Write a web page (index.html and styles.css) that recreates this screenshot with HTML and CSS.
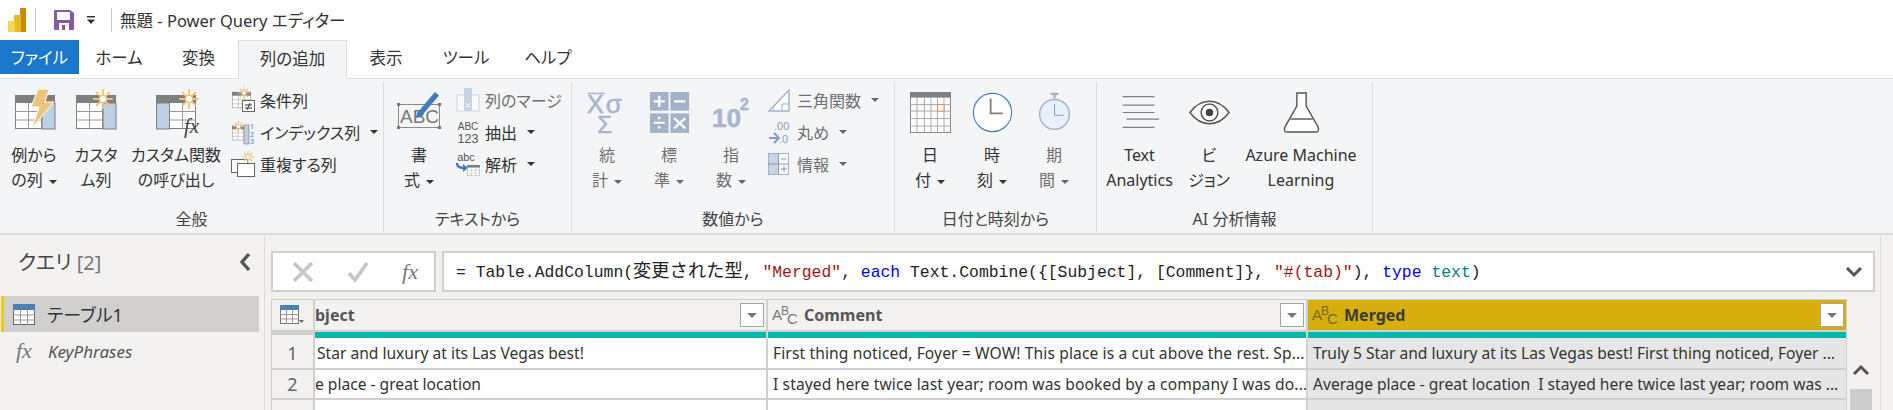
FILE: index.html
```html
<!DOCTYPE html>
<html lang="ja">
  <head>
    <meta charset="UTF-8">
    <title>無題 - Power Query エディター</title>
    <link rel="stylesheet" href="styles.css">
  </head>
  <body>
    <svg class="defs" aria-hidden="true">
      <symbol id="sun" viewBox="0 0 20 20">
        <g stroke="#eec47c" stroke-width="2" stroke-linecap="round">
          <path d="M10 1v5M10 14v5M1 10h5M14 10h5M3.600 3.600l3.500 3.500M12.900 12.900l3.500 3.500M3.600 16.400l3.500-3.500M12.900 7.100l3.500-3.500"/>
        </g>
        <circle cx="10" cy="10" r="3.600" fill="#fff" stroke="#eec47c" stroke-width="1.400"/>
      </symbol>
      <symbol id="grid" viewBox="0 0 40 34">
        <rect x=".5" y=".5" width="39" height="33" fill="#fff" stroke="#7f7f7f"/>
        <rect x="0" y="0" width="40" height="8" fill="#7f7f7f"/>
        <path d="M0 16.500h40M0 25h40M13.500 8v26M26.500 8v26" stroke="#9a9a9a" fill="none"/>
      </symbol>
    </svg>

    <header class="titlebar">
      <svg class="logo" viewBox="0 0 18 24">
        <rect x="12" width="6" height="24" fill="#c98a0c"/>
        <rect x="6" y="7" width="7" height="17" fill="#e8b923"/>
        <rect y="13" width="7" height="11" fill="#f5d44f"/>
      </svg>
      <span class="tb-sep"></span>
      <svg class="save" viewBox="0 0 20 20">
        <path d="M1 0h15l4 3v16a1 1 0 0 1-1 1H1a1 1 0 0 1-1-1V1a1 1 0 0 1 1-1z" fill="#8658a8"/>
        <rect x="3" y="2" width="13" height="8" fill="#fff"/>
        <rect x="5" y="13" width="10" height="7" fill="#fff"/>
        <rect x="8" y="15" width="3" height="5" fill="#8658a8"/>
      </svg>
      <svg class="qat-more" viewBox="0 0 10 10">
        <path d="M1 1h8v1.500H1zM1 4.500h8L5 9z" fill="#333"/>
      </svg>
      <span class="tb-sep tb-sep-2"></span>
      <span class="doc-title">無題 - Power Query エディター</span>
    </header>

    <nav class="tabs">
      <div class="tab tab-file">ファイル</div>
      <div class="tab">ホーム</div>
      <div class="tab">変換</div>
      <div class="tab tab-active">列の追加</div>
      <div class="tab">表示</div>
      <div class="tab">ツール</div>
      <div class="tab">ヘルプ</div>
    </nav>

    <section class="ribbon">
      <div class="group group-general">
        <div class="group-body">
          <div class="btn w60">
            <svg class="ic" viewBox="0 0 44 44">
              <use href="#grid" x="3" y="6" width="40" height="34"/>
              <rect x="30" y="14" width="13" height="26" fill="#bdd0e4" stroke="#7f7f7f"/>
              <path d="M37 0h-11l-7 18h8l-7 21 22-26h-9z" fill="#eec47c" stroke="#fff"/>
            </svg>
            <div class="label">例から<br>の列<i class="caret"></i></div>
          </div>
          <div class="btn w64">
            <svg class="ic" viewBox="0 0 44 44">
              <use href="#grid" x="2" y="6" width="40" height="34"/>
              <rect x="29" y="14" width="13" height="26" fill="#bdd0e4" stroke="#7f7f7f"/>
              <use href="#sun" x="19" y="0" width="20" height="20"/>
            </svg>
            <div class="label">カスタ<br>ム列</div>
          </div>
          <div class="btn w96">
            <svg class="ic ic-wide" viewBox="0 0 56 50">
              <use href="#grid" x="8" y="6" width="40" height="34"/>
              <rect x="8.500" y="14" width="13" height="26" fill="#bdd0e4" stroke="#7f7f7f"/>
              <use href="#sun" x="31" y="0" width="20" height="20"/>
              <text class="fx" x="36" y="44" font-size="21">fx</text>
            </svg>
            <div class="label">カスタム関数<br>の呼び出し</div>
          </div>
          <div class="stack stack-first">
            <div class="row">
              <svg class="ic-sm" viewBox="0 0 24 26">
                <use href="#grid" x="1" y="3" width="19" height="20"/>
                <use href="#sun" x="7" y="0" width="12" height="12"/>
                <rect x="11.500" y="13.500" width="12" height="11" fill="#fff" stroke="#666"/>
                <path d="M14 18h7M14 21h7M19 16l-3 7" stroke="#333" fill="none"/>
              </svg>
              <span>条件列</span>
            </div>
            <div class="row">
              <svg class="ic-sm" viewBox="0 0 24 26">
                <use href="#grid" x="1" y="3" width="17" height="22"/>
                <rect x="13" y="6" width="5" height="19" fill="#bdd0e4" stroke="#7f7f7f" stroke-width=".6"/>
                <use href="#sun" x="2" y="2" width="11" height="11"/>
                <text class="num" x="19" y="10">1</text>
                <text class="num" x="19" y="18">2</text>
                <text class="num" x="19" y="25">3</text>
              </svg>
              <span>インデックス列</span><i class="caret"></i>
            </div>
            <div class="row">
              <svg class="ic-sm" viewBox="0 0 24 26">
                <rect x=".5" y="8.500" width="16" height="13" fill="#fff" stroke="#666"/>
                <rect x="6.500" y="12.500" width="17" height="13" fill="#fff" stroke="#666"/>
                <use href="#sun" x="11" y="0" width="12" height="12"/>
              </svg>
              <span>重複する列</span>
            </div>
          </div>
        </div>
        <div class="group-label">全般</div>
      </div>

      <div class="group group-text">
        <div class="group-body">
          <div class="btn w70">
            <svg class="ic" viewBox="0 0 44 44">
              <rect x="1.500" y="15.500" width="41" height="23" fill="none" stroke="#8a8a8a"/>
              <g fill="#777">
                <rect y="14" width="3" height="3"/><rect x="41" y="14" width="3" height="3"/>
                <rect y="37" width="3" height="3"/><rect x="41" y="37" width="3" height="3"/>
              </g>
              <text class="abc" x="3" y="34" font-size="19">ABC</text>
              <path d="M20 24L38 3l4 3.500-18 21-5 1.500z" fill="#3f7cbf"/>
            </svg>
            <div class="label">書<br>式<i class="caret"></i></div>
          </div>
          <div class="stack stack-text">
            <div class="row row-off">
              <svg class="ic-sm" viewBox="0 0 24 26">
                <rect x="1" y="8" width="22" height="16" fill="#f8fafc" stroke="#c5d3e3"/>
                <rect x="8" y="1" width="8" height="23" fill="#c5d3e3"/>
                <path d="M9 16l6 5M15 16l-6 5" stroke="#fff"/>
              </svg>
              <span>列のマージ</span>
            </div>
            <div class="row">
              <svg class="ic-sm" viewBox="0 0 24 26">
                <text class="tiny" x="12" y="11" font-size="10">ABC</text>
                <text class="tiny" x="12" y="24" font-size="12.500">123</text>
              </svg>
              <span>抽出</span><i class="caret"></i>
            </div>
            <div class="row">
              <svg class="ic-sm" viewBox="0 0 24 26">
                <text class="tiny" x="10" y="10" font-size="11">abc</text>
                <path d="M1 12c0 4 3 5 7 5" stroke="#3f7cbf" stroke-width="2.400" fill="none"/>
                <path d="M7 13l5 4-5 4z" fill="#3f7cbf"/>
                <use href="#grid" x="11" y="14" width="13" height="11"/>
              </svg>
              <span>解析</span><i class="caret"></i>
            </div>
          </div>
        </div>
        <div class="group-label">テキストから</div>
      </div>

      <div class="group group-number">
        <div class="group-body">
          <div class="btn w62 off">
            <svg class="ic ic-open" viewBox="0 0 44 44">
              <path d="M1 1.500h18" stroke="#a9b6cd" stroke-width="1.600"/>
              <text class="sym" x="0" y="23" font-size="27">X</text>
              <text class="sym" x="20" y="23" font-size="28">σ</text>
              <text class="sym" x="11" y="44" font-size="26">Σ</text>
            </svg>
            <div class="label">統<br>計<i class="caret"></i></div>
          </div>
          <div class="btn w62 off">
            <svg class="ic" viewBox="0 0 44 44">
              <g fill="#a3b1ca">
                <rect x="1" y="0" width="20" height="20"/><rect x="23" y="0" width="20" height="20"/>
                <rect x="1" y="23" width="20" height="21"/><rect x="23" y="23" width="20" height="21"/>
              </g>
              <path d="M5 10h12M11 4v12M27 10h12M5 33h12M27 28l12 11M39 28L27 39" stroke="#fff" stroke-width="2.400"/>
              <circle cx="11" cy="28" r="1.500" fill="#fff"/><circle cx="11" cy="38" r="1.500" fill="#fff"/>
            </svg>
            <div class="label">標<br>準<i class="caret"></i></div>
          </div>
          <div class="btn w62 off">
            <svg class="ic" viewBox="0 0 44 44">
              <text class="sym sym-bold" x="1" y="38" font-size="28">10</text>
              <text class="sym sym-bold" x="31" y="19" font-size="17">2</text>
            </svg>
            <div class="label">指<br>数<i class="caret"></i></div>
          </div>
          <div class="stack stack-number">
            <div class="row row-off">
              <svg class="ic-sm" viewBox="0 0 24 26">
                <path d="M1 24L21 3v21z" fill="#f8fafc" stroke="#a3b1ca" stroke-width="1.400"/>
                <path d="M14 24v-7h7M6 24c0-2-1-3-2-4" stroke="#a3b1ca" fill="none"/>
              </svg>
              <span>三角関数</span><i class="caret"></i>
            </div>
            <div class="row row-off">
              <svg class="ic-sm" viewBox="0 0 24 26">
                <text class="round" x="6" y="11">.00</text>
                <text class="round" x="11" y="24">.0</text>
                <path d="M1 19h8" stroke="#7f9bc4" stroke-width="2"/>
                <path d="M6 14l5 5-5 5" stroke="#7f9bc4" stroke-width="2" fill="none"/>
              </svg>
              <span>丸め</span><i class="caret"></i>
            </div>
            <div class="row row-off">
              <svg class="ic-sm" viewBox="0 0 24 26">
                <rect x=".5" y="2.500" width="20" height="21" fill="#f8fafc" stroke="#a3b1ca"/>
                <rect x="1" y="3" width="9" height="20" fill="#c9d4e4"/>
                <path d="M0 13h21M10.500 3v20M13 8h5M13 18h6M16 15v6" stroke="#8a9bb8" fill="none"/>
              </svg>
              <span>情報</span><i class="caret"></i>
            </div>
          </div>
        </div>
        <div class="group-label">数値から</div>
      </div>

      <div class="group group-date">
        <div class="group-body">
          <div class="btn w62">
            <svg class="ic" viewBox="0 0 44 44">
              <rect x=".5" y=".5" width="43" height="43" fill="#fff" stroke="#7f7f7f"/>
              <rect width="44" height="6" fill="#7f7f7f"/>
              <path d="M0 13.500h44M0 20.500h44M0 28.500h44M0 36.500h44M7.500 6v38M15.500 6v38M22.500 6v38M29.500 6v38M36.500 6v38" stroke="#a6a6a6" fill="none"/>
              <rect x="29.500" y="13.500" width="7" height="7" fill="#fff" stroke="#e08a3c"/>
            </svg>
            <div class="label">日<br>付<i class="caret"></i></div>
          </div>
          <div class="btn w62">
            <svg class="ic" viewBox="0 0 44 44">
              <circle cx="22" cy="22" r="20.500" fill="#fff" stroke="#4a80b8" stroke-width="1.200"/>
              <path d="M20 7v16h13" stroke="#7f7f7f" stroke-width="2" fill="none"/>
            </svg>
            <div class="label">時<br>刻<i class="caret"></i></div>
          </div>
          <div class="btn w62 off">
            <svg class="ic" viewBox="0 0 44 44">
              <path d="M18 2h8M22 2v5" stroke="#a3b1ca" stroke-width="2.400"/>
              <circle cx="22" cy="24" r="16" fill="#e8f0fa" stroke="#a3b1ca" stroke-width="1.500"/>
              <path d="M22 13v12h10" stroke="#8a9bb8" fill="none"/>
            </svg>
            <div class="label">期<br>間<i class="caret"></i></div>
          </div>
        </div>
        <div class="group-label">日付と時刻から</div>
      </div>

      <div class="group group-ai">
        <div class="group-body">
          <div class="btn w85">
            <svg class="ic" viewBox="0 0 44 44">
              <path d="M4 5h34M4 14h34M4 22h34M8 29h35M4 38h34" stroke="#7f7f7f" stroke-width="1.300"/>
            </svg>
            <div class="label">Text<br>Analytics</div>
          </div>
          <div class="btn w54">
            <svg class="ic" viewBox="0 0 44 44">
              <path d="M1 22c6-8 13-12 21-12s15 4 21 12c-6 8-13 12-21 12S7 30 1 22z" fill="#fff" stroke="#555" stroke-width="1.600"/>
              <circle cx="22" cy="22" r="9" fill="#fff" stroke="#555" stroke-width="1.600"/>
              <circle cx="22" cy="22" r="4" fill="#444"/>
            </svg>
            <div class="label">ビ<br>ジョン</div>
          </div>
          <div class="btn w130">
            <svg class="ic" viewBox="0 0 44 44">
              <path d="M17 1h10v14l13 23c1 3 0 5-3 5H7c-3 0-4-2-3-5l13-23z" fill="#fff" stroke="#555" stroke-width="1.500"/>
              <path d="M10 29h24" stroke="#555" stroke-width="1.500"/>
            </svg>
            <div class="label">Azure Machine<br>Learning</div>
          </div>
        </div>
        <div class="group-label">AI 分析情報</div>
      </div>
    </section>

    <main class="main">
      <aside class="queries">
        <div class="queries-head">
          <span>クエリ <span class="count">[2]</span></span>
          <svg class="collapse" viewBox="0 0 12 20">
            <path d="M10 2L3 10l7 8" stroke="#555" stroke-width="3.400" fill="none"/>
          </svg>
        </div>
        <div class="query query-active">
          <svg class="query-icon" viewBox="0 0 22 24">
            <rect x=".5" y="2.500" width="21" height="20" fill="#fff" stroke="#666"/>
            <rect y="2" width="22" height="6" fill="#4a80b8"/>
            <path d="M0 13h22M0 18h22M7.500 8v15M14.500 8v15" stroke="#999" fill="none"/>
          </svg>
          <span>テーブル1</span>
        </div>
        <div class="query query-fn">
          <span class="fn-mark">fx</span>
          <span>KeyPhrases</span>
        </div>
      </aside>

      <div class="workspace">
        <div class="formula-row">
          <div class="formula-btns">
            <svg class="fb-icon" viewBox="0 0 22 22">
              <path d="M2 2l18 18M20 2L2 20" stroke="#c8c6c4" stroke-width="3.600"/>
            </svg>
            <svg class="fb-icon" viewBox="0 0 22 22">
              <path d="M2 12l6 7L20 2" stroke="#c8c6c4" stroke-width="3.600" fill="none"/>
            </svg>
            <span class="fn-mark fb-fx">fx</span>
          </div>
          <div class="formula">
            <code>= Table.AddColumn(<span class="cjk">変更された型</span>, <b class="str">"Merged"</b>, <b class="kw">each</b> Text.Combine({[Subject], [Comment]}, <b class="str">"#(tab)"</b>), <b class="kw">type</b> <b class="ty">text</b>)</code>
            <svg class="expand" viewBox="0 0 18 12">
              <path d="M2 2l7 7 7-7" stroke="#555" stroke-width="3" fill="none"/>
            </svg>
          </div>
        </div>

        <div class="table-row">
          <div class="table">
            <div class="corner">
              <svg class="corner-icon" viewBox="0 0 24 20">
                <rect x=".5" y=".5" width="18" height="18" fill="#fff" stroke="#777"/>
                <rect width="19" height="5" fill="#4a80b8"/>
                <path d="M0 9.500h19M0 14h19M6.500 5v14M12.500 5v14" stroke="#999" fill="none"/>
                <path d="M19 15h5l-2.500 3z" fill="#666"/>
              </svg>
            </div>
            <div class="head">
              <span class="head-name head-cut">bject</span>
              <span class="filter"><i></i></span>
            </div>
            <div class="head">
              <svg class="type" viewBox="0 0 24 20"><text x="0" y="15" font-size="15">A</text><text x="9" y="10" font-size="12">B</text><text x="15" y="19" font-size="15">C</text></svg>
              <span class="head-name">Comment</span>
              <span class="filter"><i></i></span>
            </div>
            <div class="head head-sel">
              <svg class="type" viewBox="0 0 24 20"><text x="0" y="15" font-size="15">A</text><text x="9" y="10" font-size="12">B</text><text x="15" y="19" font-size="15">C</text></svg>
              <span class="head-name">Merged</span>
              <span class="filter"><i></i></span>
            </div>

            <div class="stripe-gap"></div>
            <div class="stripe"></div>
            <div class="stripe"></div>
            <div class="stripe"></div>

            <div class="num-cell">1</div>
            <div class="cell cell-first">Star and luxury at its Las Vegas best!</div>
            <div class="cell cell-loose">First thing noticed, Foyer = WOW! This place is a cut above the rest. Sp...</div>
            <div class="cell cell-sel">Truly 5 Star and luxury at its Las Vegas best! First thing noticed, Foyer ...</div>

            <div class="num-cell">2</div>
            <div class="cell cell-cut">e place - great location</div>
            <div class="cell cell-loose">I stayed here twice last year; room was booked by a company I was do...</div>
            <div class="cell cell-sel">Average place - great location&nbsp; I stayed here twice last year; room was ...</div>

            <div class="num-cell"></div>
            <div class="cell"></div>
            <div class="cell"></div>
            <div class="cell cell-sel"></div>
          </div>
          <div class="vscroll">
            <svg class="vs-up" viewBox="0 0 18 12">
              <path d="M2 10l7-7 7 7" stroke="#555" stroke-width="3" fill="none"/>
            </svg>
            <div class="vs-thumb"></div>
          </div>
        </div>
      </div>
    </main>
  </body>
</html>
```

FILE: styles.css
```css
:root {
  --ribbon-bg: #f3f5f7;
  --pane-bg: #f3f2f1;
  --line: #d2d0ce;
  --soft-line: #dcdee0;
  --off-text: #6f6f6f;
  --off-icon: #a9b6cd;
  --ui-font: "Noto Sans", "Noto Sans CJK JP", sans-serif;
}

html,
body {
  height: 410px;
  overflow: hidden;
}

body {
  margin: 0;
  font-family: var(--ui-font);
  font-size: 16px;
  font-feature-settings: "palt";
  color: #333;
  background: #fff;
}

.defs {
  position: absolute;
  width: 0;
  height: 0;
}

/* title bar */

.titlebar {
  display: flex;
  align-items: center;
  height: 40px;
  padding-left: 8px;
}

.logo {
  width: 18px;
  height: 24px;
}

.tb-sep {
  width: 1px;
  height: 24px;
  margin: 0 18px 0 9px;
  background: #c8c8c8;
}

.tb-sep-2 {
  margin: 0 8px 0 15px;
}

.save {
  width: 20px;
  height: 20px;
}

.qat-more {
  width: 10px;
  height: 10px;
  margin-left: 12px;
}

.doc-title {
  font-size: 16.5px;
}

/* tabs */

.tabs {
  display: grid;
  grid-template-columns: 79px 80px 79px 109px 78px 82px 82px;
  height: 39px;
  box-sizing: border-box;
  border-bottom: 1px solid var(--soft-line);
}

.tab {
  display: flex;
  align-items: center;
  justify-content: center;
  height: 34px;
  font-size: 16.5px;
}

.tab-file {
  background: #1a77c9;
  color: #fff;
}

.tab-active {
  height: 39px;
  padding-bottom: 5px;
  box-sizing: border-box;
  background: var(--ribbon-bg);
  border: 1px solid var(--soft-line);
  border-bottom: 0;
}

/* ribbon */

.ribbon {
  display: flex;
  height: 156px;
  box-sizing: border-box;
  padding-top: 3px;
  background: var(--ribbon-bg);
  border-bottom: 2px solid var(--soft-line);
}

.group {
  display: flex;
  flex-direction: column;
  height: 150px;
  box-sizing: border-box;
  border-right: 1px solid var(--soft-line);
}

.group-general { width: 384px; }
.group-text { width: 188px; }
.group-number { width: 323px; }
.group-date { width: 202px; }
.group-ai { width: 276px; }

.group-body {
  display: flex;
  flex: 1;
  padding-top: 7px;
}

.group-general .group-body { padding-left: 4px; }
.group-number .group-body { padding: 10px 0 0 4px; }
.group-date .group-body { padding: 10px 0 0 4px; }
.group-ai .group-body { padding-top: 10px; }

.group-number .ic,
.group-date .ic,
.group-ai .ic {
  width: 41px;
  height: 41px;
}

.group-label {
  height: 25px;
  line-height: 25px;
  text-align: center;
  font-size: 16px;
  color: #444;
}

.btn {
  display: flex;
  flex-direction: column;
  align-items: center;
}

.w54 { width: 54px; }
.w60 { width: 60px; }
.w62 { width: 62px; }
.w64 { width: 64px; }
.w70 { width: 70px; }
.w85 { width: 85px; }
.w96 { width: 96px; }
.w130 { width: 130px; }

.ic {
  width: 44px;
  height: 44px;
  flex: none;
}

.ic-open {
  overflow: visible;
}

.ic-wide {
  width: 56px;
  height: 50px;
  margin-bottom: -6px;
}

.label {
  margin-top: 10px;
  line-height: 25px;
  text-align: center;
  white-space: nowrap;
}

.off .label,
.row-off {
  color: var(--off-text);
}

.caret {
  display: inline-block;
  width: 0;
  height: 0;
  margin-left: 6px;
  vertical-align: middle;
  border-left: 4px solid transparent;
  border-right: 4px solid transparent;
  border-top: 4px solid #333;
}

.off .caret,
.row-off .caret {
  border-top-color: #666;
}

.stack {
  display: flex;
  flex-direction: column;
  margin-top: -5px;
}

.stack-first { margin-left: 7px; }
.stack-text { margin-left: 2px; }
.stack-number { margin: -8px 0 0 6px; }

.row {
  display: flex;
  align-items: center;
  gap: 5px;
  height: 32px;
  white-space: nowrap;
}

.row .caret {
  margin-left: 5px;
}

.ic-sm {
  width: 24px;
  height: 26px;
  flex: none;
}

.fx,
.fn-mark {
  font-family: "Liberation Serif", serif;
  font-style: italic;
}

.fx { fill: #444; }

.num {
  font-size: 7px;
  fill: #3f7cbf;
}

.abc {
  font-family: "Liberation Sans", sans-serif;
  fill: #777;
}

.tiny {
  font-family: "Liberation Sans", sans-serif;
  text-anchor: middle;
  fill: #555;
}

.sym {
  font-family: "Liberation Sans", sans-serif;
  fill: var(--off-icon);
  stroke: var(--off-icon);
  stroke-width: 0.6;
}

.sym-bold {
  font-weight: bold;
}

.round {
  font-size: 11px;
  font-family: "Liberation Sans", sans-serif;
  fill: #8a9bb8;
}

/* lower part */

.main {
  display: flex;
  height: 175px;
  background: var(--pane-bg);
}

.queries {
  width: 265px;
  flex: none;
  box-sizing: border-box;
  border-right: 1px solid var(--soft-line);
}

.queries-head {
  display: flex;
  align-items: center;
  justify-content: space-between;
  height: 53px;
  margin-bottom: 8px;
  padding: 0 13px 0 18px;
  font-size: 20px;
  color: #444;
}

.count {
  color: #777;
}

.collapse {
  width: 12px;
  height: 20px;
}

.query {
  display: flex;
  align-items: center;
  gap: 12px;
  width: 258px;
  margin-left: 1px;
  box-sizing: border-box;
  padding-left: 11px;
  font-size: 18px;
}

.query-active {
  height: 36px;
  background: #d2d0ce;
  border-left: 3px solid #f2c811;
  padding-left: 9px;
}

.query-icon {
  width: 22px;
  height: 24px;
}

.query-fn {
  height: 38px;
  font-style: italic;
  font-size: 17px;
  color: #555;
}

.fn-mark {
  font-size: 22px;
  color: #777;
  margin: 0 4px 0 4px;
}

.workspace {
  flex: 1;
  padding: 16px 0 0 6px;
  border-right: 1px solid var(--soft-line);
  margin-right: 12px;
}

.formula-row {
  display: flex;
  gap: 6px;
  width: 1604px;
  height: 41px;
}

.formula-btns,
.formula {
  display: flex;
  align-items: center;
  box-sizing: border-box;
  background: #fff;
  border: 2px solid var(--line);
}

.formula-btns {
  width: 165px;
  flex: none;
  justify-content: space-between;
  padding: 0 16px 0 19px;
}

.fb-icon {
  width: 22px;
  height: 22px;
}

.fb-fx {
  margin: 0;
}

.formula {
  flex: 1;
  justify-content: space-between;
  padding: 0 10px 0 12px;
}

code {
  margin-top: 2px;
  font-family: "Liberation Mono", "Noto Sans CJK JP", monospace;
  font-size: 16.4px;
  font-feature-settings: normal;
  color: #222;
}

code b {
  font-weight: normal;
}

.cjk {
  font-size: 18.3px;
  line-height: 1;
}

.str { color: #a31515; }
.kw { color: #0000ff; }
.ty { color: #008080; }

.expand {
  width: 18px;
  height: 12px;
}

.table-row {
  display: flex;
  margin-top: 7px;
}

.table {
  display: grid;
  grid-template-columns: 41px 451px 538px 538px;
  grid-template-rows: 32px 6px 32px 30px 30px;
  column-gap: 2px;
  width: 1576px;
  height: 111px;
  box-sizing: border-box;
  padding: 1px 1px 0;
  overflow: hidden;
  background: var(--line);
}

.corner,
.head,
.num-cell {
  background: var(--pane-bg);
}

.corner {
  display: flex;
  align-items: center;
  padding-left: 8px;
  border-bottom: 2px solid var(--line);
}

.corner-icon {
  width: 24px;
  height: 20px;
}

.head {
  display: flex;
  align-items: center;
  gap: 8px;
  padding: 0 2px 0 4px;
  border-bottom: 2px solid var(--line);
  font-size: 16px;
  font-weight: bold;
  color: #555;
}

.head-name {
  flex: 1;
}

.head-cut {
  margin-left: -4px;
}

.head-sel {
  background: #d6af0c;
  color: #3b3b3b;
}

.type {
  width: 24px;
  height: 20px;
  overflow: visible;
  fill: #777;
  font-family: "Liberation Sans", sans-serif;
  font-weight: normal;
}

.head-sel .type {
  fill: #7a6a28;
}

.filter {
  display: flex;
  align-items: center;
  justify-content: center;
  width: 24px;
  height: 24px;
  box-sizing: border-box;
  background: #fff;
  border: 1px solid #a6a6a6;
}

.filter i {
  width: 0;
  height: 0;
  border-left: 5px solid transparent;
  border-right: 5px solid transparent;
  border-top: 5px solid #777;
}

.stripe {
  background: #01b8aa;
}

.stripe-gap {
  background: var(--pane-bg);
  border-top: 3px solid var(--line);
}

.num-cell {
  display: flex;
  align-items: center;
  justify-content: center;
  border-bottom: 2px solid var(--line);
  font-size: 18px;
  color: #666;
}

.cell {
  display: flex;
  align-items: center;
  padding-left: 5px;
  background: #fff;
  border-bottom: 2px solid var(--line);
  font-size: 15.6px;
  white-space: nowrap;
  overflow: hidden;
  color: #333;
}

.cell-loose {
  letter-spacing: 0.12px;
}

.cell-first {
  padding-left: 2px;
}

.cell-cut {
  padding-left: 0;
}

.cell-sel {
  background: #e6e6e6;
}

.vscroll {
  width: 22px;
  margin-left: 3px;
  padding-top: 65px;
}

.vs-up {
  display: block;
  width: 18px;
  height: 12px;
  margin: 0 auto 13px;
}

.vs-thumb {
  height: 40px;
  background: #cdcdcd;
}
```
